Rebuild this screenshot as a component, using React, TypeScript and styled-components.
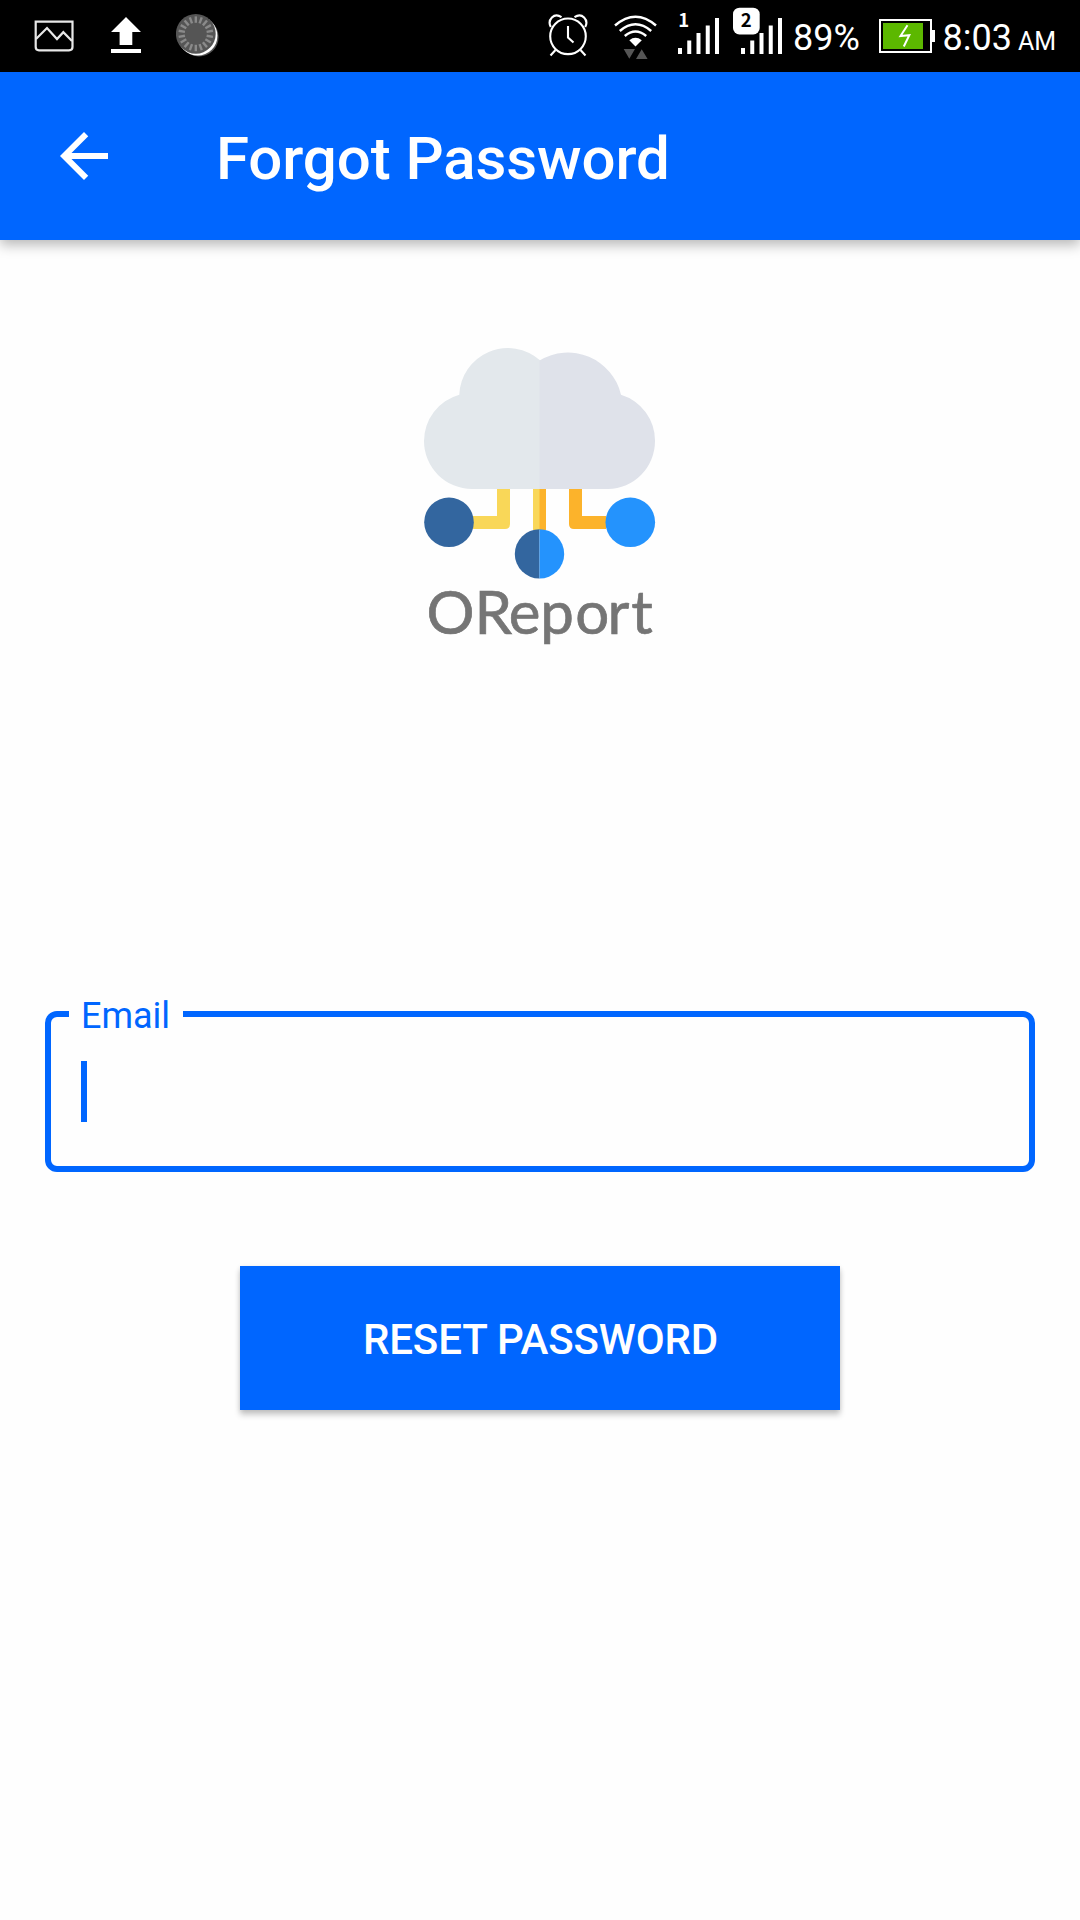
import React from "react";
import styled, { createGlobalStyle } from "styled-components";

const BLUE = "#0066ff";

const GlobalStyle = createGlobalStyle`
  * { box-sizing: border-box; }
  html, body { margin: 0; padding: 0; background: #fefefe; }
  body { font-family: Roboto, "Noto Sans", sans-serif; overflow: hidden; }
`;

const Screen = styled.div`
  width: 1080px;
  height: 1920px;
  display: flex;
  flex-direction: column;
  background: #fefefe;
  overflow: hidden;
`;

const StatusBar = styled.header`
  flex: none;
  height: 72px;
  background: #000;
  color: #fff;
  display: flex;
  justify-content: space-between;
`;

const StatusGroup = styled.div`
  display: flex;
  align-items: flex-start;
`;

const Glyph = styled.svg<{ $gap?: number }>`
  flex: none;
  display: block;
  margin-left: ${(p) => p.$gap ?? 0}px;
`;

const StatusText = styled.span<{ $width: number; $inset: number }>`
  flex: none;
  width: ${(p) => p.$width}px;
  padding-left: ${(p) => p.$inset}px;
  font-size: 36px;
  line-height: 76px;
  white-space: nowrap;
`;

const Meridiem = styled.span`
  font-size: 25px;
  margin-left: 6px;
`;

const AppBar = styled.div`
  flex: none;
  height: 168px;
  padding-left: 48px;
  background: ${BLUE};
  color: #fff;
  display: flex;
  align-items: center;
  box-shadow: 0 5px 12px rgba(0, 0, 0, 0.28);
`;

const BackButton = styled.button`
  flex: none;
  width: 72px;
  height: 72px;
  padding: 0;
  border: 0;
  background: none;
  color: inherit;
`;

const Title = styled.h1`
  margin: 5px 0 0 96px;
  font-size: 60px;
  font-weight: 500;
  line-height: 70px;
  letter-spacing: -0.1px;
`;

const Content = styled.main`
  flex: 1;
  display: flex;
  flex-direction: column;
  align-items: center;
  padding-top: 90px;
`;

const Logo = styled.svg`
  display: block;
  width: 280px;
  height: 340px;
  margin-bottom: 323px;
`;

const Field = styled.fieldset`
  width: 990px;
  height: 179px;
  margin: 0;
  padding: 0 18px;
  border: 6px solid ${BLUE};
  border-radius: 12px;
  color: ${BLUE};
`;

const FieldLabel = styled.legend`
  width: 114px;
  height: 42px;
  padding: 0 12px;
  font-size: 36px;
  line-height: 46px;
`;

const Caret = styled.div`
  width: 6px;
  height: 61px;
  margin: 26px 0 0 12px;
  background: ${BLUE};
`;

const ResetButton = styled.button`
  width: 600px;
  height: 144px;
  margin-top: 94px;
  padding: 2px 0 0 1px;
  border: 0;
  background: ${BLUE};
  color: #fff;
  font-family: inherit;
  font-size: 42px;
  font-weight: 500;
  letter-spacing: -0.13px;
  box-shadow: 0 5px 6px rgba(0, 0, 0, 0.2), 0 1px 5px rgba(0, 0, 0, 0.1);
`;

const PictureIcon = () => (
  <Glyph width="40" height="72" $gap={34} viewBox="34 0 40 72" fill="none" stroke="#e8e8e8" strokeWidth="2.2">
    <path d="M35.7 21.7H72.5V47Q72.5 50.3 69 50.3H39Q35.7 50.3 35.7 47Z" />
    <path d="M36 39L47 28L57 39L63.3 32.2L72 41" />
  </Glyph>
);

const UploadIcon = () => (
  <Glyph width="30" height="72" $gap={37} viewBox="111 0 30 72" fill="#fff">
    <path d="M126 17L141 32H132.3V45H119.6V32H111ZM111 49H141V53H111Z" />
  </Glyph>
);

const SpinnerIcon = () => (
  <Glyph width="44" height="72" $gap={35} viewBox="176 0 44 72">
    <circle cx="199" cy="37" r="19.6" fill="#555" />
    <circle cx="197.6" cy="35.8" r="19.8" fill="#fff" />
    <circle cx="195.8" cy="33.8" r="19.9" fill="#555" />
    <g stroke="#8a8a8a" strokeWidth="2.4">
      {Array.from({ length: 18 }, (_, i) => (
        <path key={i} d="M195.8 16.4V22.8" transform={`rotate(${i * 20} 195.8 33.8)`} />
      ))}
    </g>
  </Glyph>
);

const AlarmIcon = () => (
  <Glyph width="40" height="72" viewBox="548 0 40 72" fill="none" stroke="#fff" strokeWidth="2.1">
    <circle cx="568" cy="36.3" r="17.8" />
    <path d="M550.8 27C547 20 554 12 561.5 17.2M585.2 27C589 20 582 12 574.5 17.2M555.5 50L550.5 55.5M580.5 50L585.5 55.5" />
    <path d="M568 26V37.5L573.5 42.5" />
  </Glyph>
);

const WifiIcon = () => (
  <Glyph width="44" height="72" $gap={26} viewBox="614 0 44 72">
    <g fill="none" stroke="#fff" strokeWidth="2.5">
      <path d="M615 25.5Q635.5 8 656 25.5" />
      <path d="M619.8 31Q635.5 17.5 651.2 31" />
      <path d="M624.8 36Q635.5 27 646.2 36" />
    </g>
    <path d="M629.3 40.3Q635.5 35.4 641.8 40.3L635.5 46.5Z" fill="#fff" />
    <path d="M623.7 49H635L629.3 58.7ZM636 59H647.6L641.7 49.3Z" fill="#555" />
  </Glyph>
);

const Bars = ({ x }: { x: number }) => (
  <g fill="#fff">
    {[6, 13.5, 21, 28.5, 36].map((h, i) => (
      <rect key={h} x={x + i * 9.25} y={54 - h} width="4" height={h} />
    ))}
  </g>
);

const SimNumber = styled.text`
  font-family: "Noto Sans CJK SC", "Noto Sans", sans-serif;
  font-weight: 700;
  font-size: 18.5px;
`;

const SignalOne = () => (
  <Glyph width="44" height="72" $gap={19} viewBox="677 0 44 72">
    <Bars x={678} />
    <SimNumber x="683.6" y="26.9" textAnchor="middle" fill="#fff">1</SimNumber>
  </Glyph>
);

const SignalTwo = () => (
  <Glyph width="51" height="72" $gap={12} viewBox="733 0 51 72">
    <Bars x={741} />
    <rect x="732.5" y="7" width="28" height="28" rx="7" fill="#000" />
    <rect x="733" y="7.7" width="26.7" height="26.7" rx="6.5" fill="#fff" />
    <SimNumber x="746.3" y="26.9" textAnchor="middle" fill="#000">2</SimNumber>
  </Glyph>
);

const BatteryIcon = () => (
  <Glyph width="56" height="72" viewBox="879 0 56 72">
    <rect x="880" y="20" width="51" height="32" fill="none" stroke="#fff" strokeWidth="2" />
    <path d="M932 30H935V42H932Z" fill="#fff" />
    <rect x="883" y="23" width="40" height="26" fill="#5cb800" />
    <path d="M907.5 25.3L900.5 36L909.3 35.2L903.8 46.5" fill="none" stroke="#fff" strokeWidth="2" />
  </Glyph>
);

const BackIcon = () => (
  <svg width="72" height="72" viewBox="0 0 24 24" fill="#fff">
    <path d="M20 11H7.83l5.59-5.59L12 4l-8 8 8 8 1.41-1.41L7.83 13H20v-2z" />
  </svg>
);

const OReportLogo = () => (
  <Logo viewBox="0 0 280 340">
    <path
      d="M140 30.3A48.5 48.5 0 0 0 59.3 64.7A48 48 0 0 0 24 111A48 48 0 0 0 72 159H140Z"
      fill="#e3e8ec"
    />
    <path
      d="M139.5 30.6A54.5 54.5 0 0 1 221 64.7A48 48 0 0 1 255 111A47.5 48 0 0 1 208 159H139.5Z"
      fill="#dfe2ea"
    />
    <path d="M97 159H110V194Q110 199 105 199H73V186H97ZM133 159H140V200H133Z" fill="#f9d758" />
    <path d="M139.5 159H146V200H139.5ZM169 159H182V186H206V199H174Q169 199 169 194Z" fill="#fcb32b" />
    <circle cx="49" cy="192.3" r="24.8" fill="#33669f" />
    <circle cx="230.3" cy="192.3" r="24.8" fill="#2493fd" />
    <path d="M139.5 199.2A24.7 24.7 0 0 0 139.5 248.6Z" fill="#33669f" />
    <path d="M139.5 199.2A24.7 24.7 0 0 1 139.5 248.6Z" fill="#2493fd" />
    <text
      x="26.6 74.5 108.8 140.2 175.2 207.5 231.2"
      y="304.3"
      fontFamily="Lato, sans-serif"
      fontSize="60"
      fill="#757575"
      stroke="#757575"
      strokeWidth="0.7"
    >
      OReport
    </text>
  </Logo>
);

export default function App() {
  return (
    <Screen>
      <GlobalStyle />
      <StatusBar>
        <StatusGroup>
          <PictureIcon />
          <UploadIcon />
          <SpinnerIcon />
        </StatusGroup>
        <StatusGroup>
          <AlarmIcon />
          <WifiIcon />
          <SignalOne />
          <SignalTwo />
          <StatusText $width={95} $inset={9}>89%</StatusText>
          <BatteryIcon />
          <StatusText $width={145} $inset={7.5}>
            8:03<Meridiem>AM</Meridiem>
          </StatusText>
        </StatusGroup>
      </StatusBar>
      <AppBar>
        <BackButton aria-label="Back">
          <BackIcon />
        </BackButton>
        <Title>Forgot Password</Title>
      </AppBar>
      <Content>
        <OReportLogo />
        <Field>
          <FieldLabel>Email</FieldLabel>
          <Caret />
        </Field>
        <ResetButton>RESET PASSWORD</ResetButton>
      </Content>
    </Screen>
  );
}
